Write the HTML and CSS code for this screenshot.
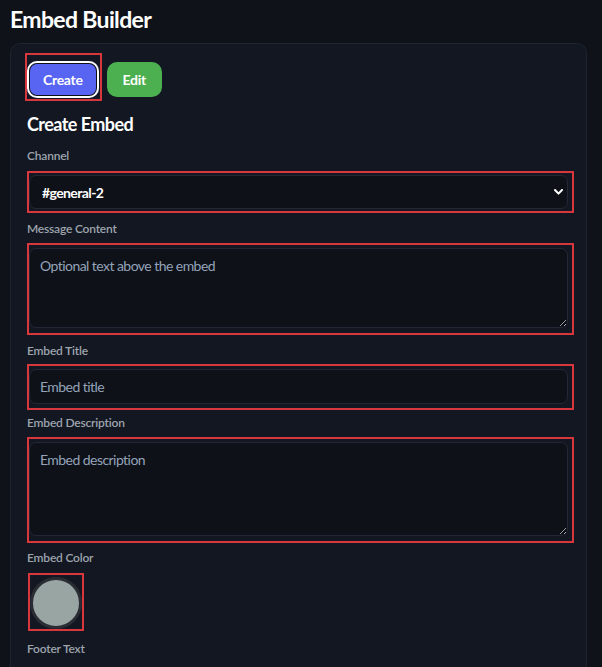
FILE: index.html
```html
<!DOCTYPE html>
<html lang="en">
<head>
<meta charset="utf-8">
<title>Embed Builder</title>
<link rel="stylesheet" href="styles.css">
</head>
<body>
<h1 class="page-title">Embed Builder</h1>
<div class="panel">
  <div class="mode-row">
    <span class="hl hl-btn"><button class="btn btn-create" type="button">Create</button></span>
    <button class="btn btn-edit" type="button">Edit</button>
  </div>
  <h2 class="section-title">Create Embed</h2>

  <label class="field-label lb-channel">Channel</label>
  <div class="hl hl-select">
    <div class="select-wrap">
      <select class="select"><option>#general-2</option></select>
      <svg class="chevron" width="9" height="6" viewBox="0 0 9 6"><polyline points="1,1 4.5,4.6 8,1" fill="none" stroke="#ffffff" stroke-width="2" stroke-linecap="round" stroke-linejoin="round"/></svg>
    </div>
  </div>

  <label class="field-label lb-msg">Message Content</label>
  <div class="hl hl-msg">
    <textarea class="textarea ta-msg" placeholder="Optional text above the embed"></textarea>
  </div>

  <label class="field-label lb-title">Embed Title</label>
  <div class="hl hl-title">
    <input class="input" type="text" placeholder="Embed title">
  </div>

  <label class="field-label lb-desc">Embed Description</label>
  <div class="hl hl-desc">
    <textarea class="textarea ta-desc" placeholder="Embed description"></textarea>
  </div>

  <label class="field-label lb-color">Embed Color</label>
  <div class="hl hl-color">
    <div class="swatch"></div>
  </div>

  <label class="field-label lb-footer">Footer Text</label>
  <div class="hl hl-title">
    <input class="input" type="text" placeholder="Footer text">
  </div>
</div>
</body>
</html>
```
FILE: styles.css
```css
html, body {
  margin: 0;
  padding: 0;
  background: #0f1319;
  overflow: hidden;
}
body {
  font-family: Lato, "Noto Sans", sans-serif;
  color: #e8eaee;
}
.page-title {
  margin: 5px 0 10px 10px;
  font-size: 23px;
  line-height: 28px;
  font-weight: 700;
  letter-spacing: -0.65px;
  color: #ffffff;
}
.panel {
  margin: 0 15px 0 10px;
  background: #121722;
  border: 1px solid #1e2430;
  border-radius: 10px;
  padding: 9px 12px 40px 16px;
}
.hl {
  border: 2px solid #d8373d;
  box-sizing: border-box;
}
.mode-row {
  display: flex;
  align-items: flex-start;
  gap: 5px;
}
.hl-btn {
  display: inline-flex;
  margin-left: -2px;
  padding: 6px 1px 1px 0;
}
.btn {
  font-family: Lato, sans-serif;
  font-size: 14px;
  font-weight: 700;
  letter-spacing: -0.3px;
  color: #ffffff;
  border: none;
  border-radius: 10px;
  padding: 0 16px;
  cursor: pointer;
}
.btn-create {
  height: 37px;
  background: #5865f2;
  box-shadow: inset 0 0 0 2px #ffffff, inset 0 0 0 3px #0d1016;
}
.btn-edit {
  height: 35px;
  margin-top: 9px;
  background: #4caf50;
}
.section-title {
  margin: 12px 0 13px 0;
  font-size: 18px;
  line-height: 22px;
  font-weight: 700;
  letter-spacing: -0.55px;
  color: #ffffff;
}
.field-label {
  display: block;
  font-size: 12px;
  line-height: 15px;
  font-weight: 600;
  letter-spacing: -0.2px;
  color: #9ea4ad;
}
.lb-channel { margin-bottom: 8px; }
.lb-msg { margin-bottom: 7px; }
.lb-title { margin-bottom: 6px; }
.lb-desc { margin-bottom: 7px; }
.lb-color { margin-bottom: 8px; }
.lb-footer { margin-bottom: 14px; }

.hl-select { padding: 2px 4px 2px 0; margin-bottom: 8px; }
.hl-msg { padding: 3px 4px 5px 0; margin-bottom: 8px; }
.hl-title { padding: 3px 4px 4px 0; margin-bottom: 5px; }
.hl-desc { padding: 3px 4px 5px 0; margin-bottom: 7px; }
.hl-color {
  width: 56px;
  margin-left: 1px;
  padding: 2px 0 0 0;
  margin-bottom: 10px;
}

.select-wrap {
  position: relative;
}
.select {
  display: block;
  width: 100%;
  height: 34px;
  box-sizing: border-box;
  appearance: none;
  -webkit-appearance: none;
  background: #0e1118;
  border: 1px solid #232834;
  border-radius: 7px;
  color: #ffffff;
  font-family: Lato, sans-serif;
  font-size: 14px;
  font-weight: 700;
  letter-spacing: -0.6px;
  padding: 0 12px;
  outline: none;
}
.chevron {
  position: absolute;
  right: 5px;
  top: 14px;
}
.textarea, .input {
  display: block;
  width: 100%;
  box-sizing: border-box;
  background: #0e1118;
  border: 1px solid #232834;
  border-radius: 7px;
  color: #ffffff;
  font-family: Lato, sans-serif;
  font-size: 14px;
  letter-spacing: -0.55px;
  padding: 8px 10px;
  outline: none;
  margin: 0;
}
.textarea {
  resize: vertical;
  line-height: 17px;
}
.ta-msg { height: 80px; }
.ta-desc { height: 94px; }
.input {
  height: 35px;
  padding: 0 10px;
}
.textarea::placeholder, .input::placeholder {
  color: #94a3b8;
  opacity: 1;
}
.swatch {
  width: 52px;
  height: 52px;
  box-sizing: border-box;
  border-radius: 50%;
  border: 3px solid #2a2d33;
  background: #99a5a2;
}
```
